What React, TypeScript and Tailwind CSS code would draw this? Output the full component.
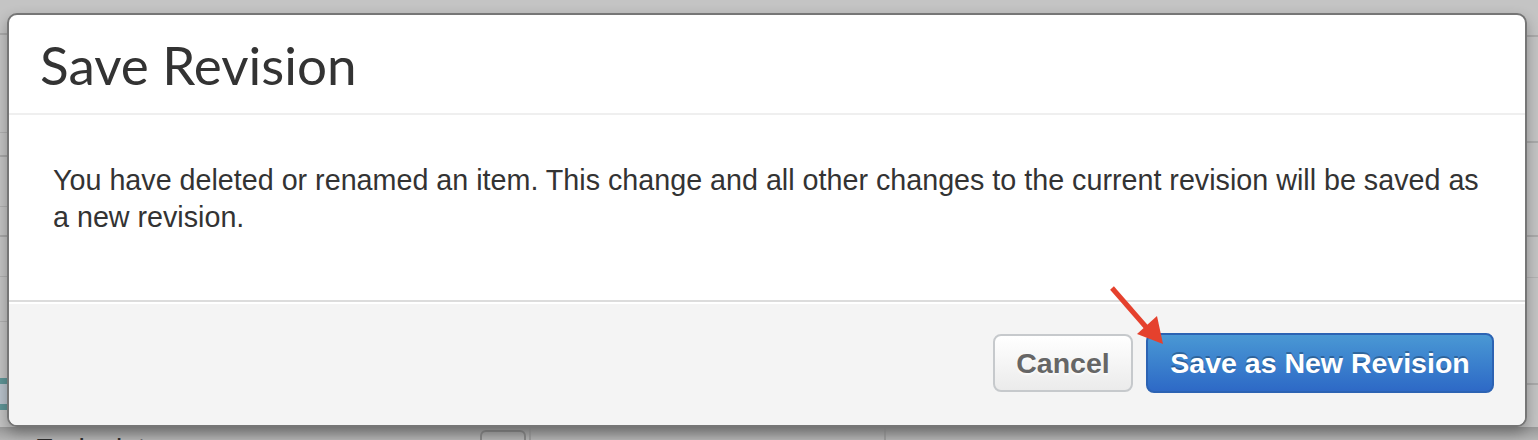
export default function App() {
  return (
    <div className="relative h-[440px] w-[1538px] overflow-hidden bg-[#c4c4c4] font-['Liberation_Sans',Arial,sans-serif]">
      {/* page behind the overlay */}
      <div className="absolute inset-0 text-[#2e2e2e]">
        <div className="absolute left-0 top-0 flex h-full w-[8px] flex-col">
          <div className="h-[35px] border-b-2 border-[#ababab]" />
          <div className="h-[98px] border-b border-[#b0b0b0]" />
          <div className="h-[24px] border-b-2 border-[#a8a8a8]" />
          <div className="h-[50px] border-b border-[#b0b0b0]" />
          <div className="h-[30px] border-b-2 border-[#a8a8a8]" />
          <div className="h-[40px] border-b border-[#b0b0b0]" />
          <div className="h-[45px] border-b border-[#b0b0b0]" />
          <div className="mt-[56px] h-[6px] bg-[#5f9597]" />
          <div className="h-[20px] bg-[#b9c3cc]" />
          <div className="h-[6px] bg-[#5f9597]" />
        </div>
        <div className="absolute right-0 top-0 flex h-full w-[11px] flex-col">
          <div className="h-[37px] border-b-2 border-[#ababab]" />
          <div className="h-[106px] border-b-2 border-[#ababab]" />
          <div className="h-[94px] border-b-2 border-[#ababab]" />
          <div className="h-[41px] border-b border-[#b3b3b3]" />
          <div className="h-[107px] border-b-2 border-[#ababab]" />
        </div>
        <div className="absolute left-0 top-[427px] flex h-[13px] w-full bg-linear-to-b from-[#9a9a9a] to-[#b4b4b4]">
          <div className="w-[480px] pl-[35px] pt-[6px] text-[28px] leading-[32px]">Endpoints</div>
          <div className="mt-[3px] h-[20px] w-[46px] rounded-[6px] border-2 border-[#888]" />
          <div className="ml-[3px] w-[2px] bg-[#9c9c9c]" />
          <div className="ml-[353px] w-[2px] bg-[#9c9c9c]" />
        </div>
      </div>

      {/* modal */}
      <div className="relative z-10 ml-[7px] mt-[13px] flex h-[414px] w-[1520px] flex-col overflow-hidden rounded-[10px] border-2 border-[#767676] bg-white shadow-[0_6px_14px_rgba(0,0,0,0.3)]">
        <div className="flex h-[100px] shrink-0 items-center border-b-2 border-[#efefef] pl-[31px] pt-[1px]">
          <h3 className="font-['Lato',sans-serif] text-[53px] leading-[60px] text-[#333]">Save Revision</h3>
        </div>
        <div className="flex-1 px-[44px] pt-[47px]">
          <p className="text-[28.7px] leading-[37px] text-[#333]">
            You have deleted or renamed an item. This change and all other changes to the current revision will be saved as a new revision.
          </p>
        </div>
        <div className="flex h-[125px] shrink-0 items-center justify-end gap-[13px] border-t-2 border-[#dcdcdc] bg-[#f4f4f4] pb-[2px] pr-[31px] shadow-[inset_0_2px_0_#fff]">
          <button className="h-[58px] w-[140px] rounded-[8px] border-2 border-[#c6c9cc] bg-linear-to-b from-white to-[#ebebeb] pt-[2px] text-[28.5px] font-bold text-[#666] [text-shadow:0_2px_2px_rgba(255,255,255,0.75)]">
            Cancel
          </button>
          <button className="h-[60px] w-[348px] rounded-[8px] border-2 border-[#2c63b3] bg-linear-to-b from-[#4a98d4] to-[#2e69c6] pt-[2px] text-[28.5px] font-bold text-white [text-shadow:0_-2px_0_rgba(0,0,0,0.25)]">
            Save as New Revision
          </button>
        </div>
      </div>

      {/* annotation arrow */}
      <svg className="absolute left-0 top-0 z-20" width="1538" height="440" viewBox="0 0 1538 440">
        <line x1="1112" y1="288" x2="1146" y2="327" stroke="#e5412d" strokeWidth="5" strokeLinecap="butt" />
        <polygon points="1137,334 1157,316 1163,344" fill="#e5412d" />
      </svg>
    </div>
  );
}
